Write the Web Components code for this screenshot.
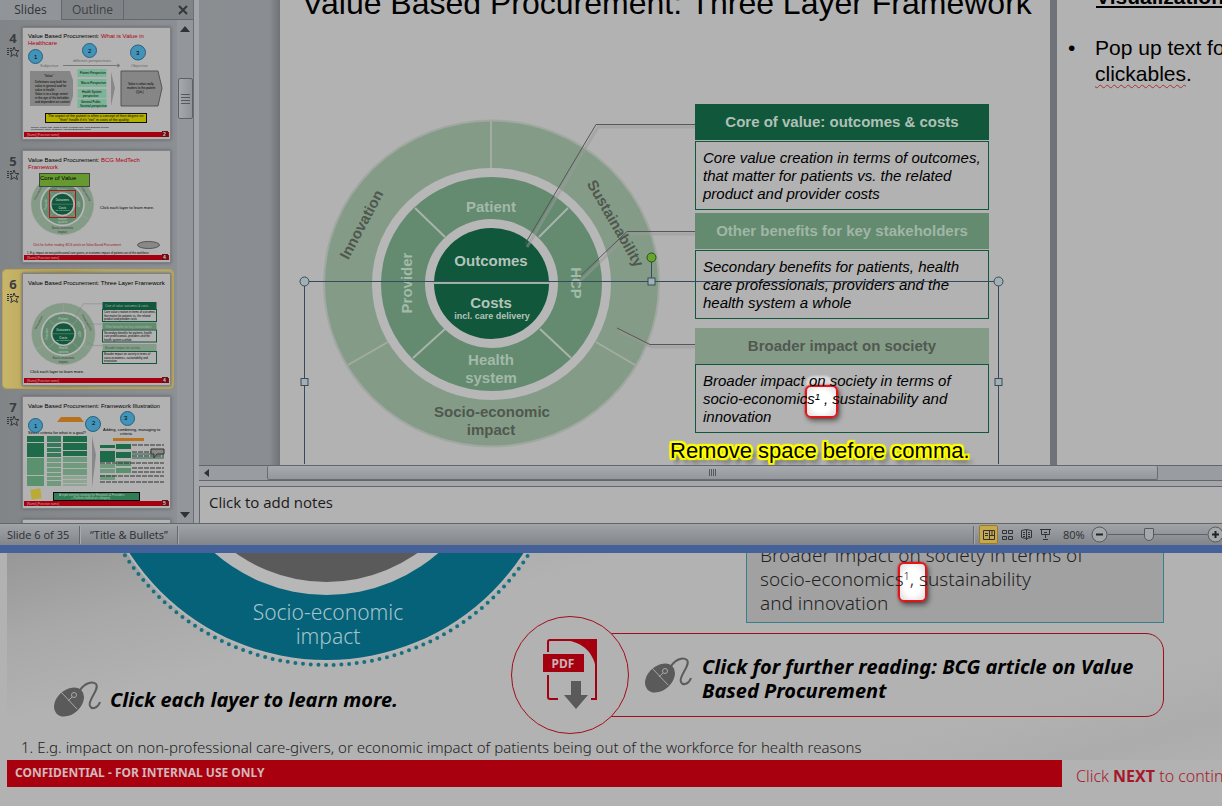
<!DOCTYPE html>
<html lang="en">
<head>
<meta charset="utf-8">
<title>Value Based Procurement review</title>
<style>
html,body{margin:0;height:100%}
body{background:#b2b2b2;color:#000;font-family:"Noto Sans","Open Sans",sans-serif;overflow:hidden}
</style>
</head>
<body>
<review-page></review-page>
<script>
const define = (name, html) => {
  const tpl = document.createElement('template');
  tpl.innerHTML = html;
  customElements.define(name, class extends HTMLElement {
    constructor() {
      super();
      this.attachShadow({ mode: 'open' }).append(tpl.content.cloneNode(true));
    }
  });
};

/* Three layer wheel, in slide coordinates */
const wheelArt = `
<g font-family="Liberation Sans, Arial, sans-serif" font-weight="700" font-size="15" text-anchor="middle">
<ellipse cx="491.500" cy="283.500" rx="167.500" ry="163" fill="#849c87" stroke="#a0a8a1" stroke-width="2"/>
<g stroke="#a3aba4" stroke-width="2"><path d="M491 121V168M348 365L388 342M635 365L596 342"/></g>
<ellipse cx="491.500" cy="284" rx="119.500" ry="116" fill="#b7b7b7"/>
<ellipse cx="491.500" cy="284" rx="110.500" ry="107" fill="#648b70"/>
<path d="M415 208L445 237M568 208L539 237M413 358L445 329M571 358L540 329" stroke="#a9b3ab" stroke-width="2"/>
<ellipse cx="491.500" cy="283.500" rx="66.500" ry="64.500" fill="#b7b7b7"/>
<ellipse cx="491.500" cy="283.500" rx="57.500" ry="55.500" fill="#10573b"/>
<path d="M433 283H550" stroke="#9fb0a6" stroke-width="2"/>
<g fill="none" stroke="#999" stroke-opacity=".5" stroke-width="3"><path d="M527 247L598 127H695M577 284L629 234H695M619 331L652 347H695"/></g>
<g fill="none" stroke="#565656" stroke-width="1"><path d="M525 244L596 124.500H695M575 281L627 231.500H695M617 328L650 344.500H695"/></g>
<g fill="#b4c4bb"><text x="491" y="266">Outcomes</text><text x="491" y="308">Costs</text>
<text x="492" y="319" font-size="9">incl. care delivery</text></g>
<g fill="#a3b9a9"><text x="491" y="212">Patient</text><text x="491" y="365">Health</text><text x="491" y="383">system</text>
<text transform="translate(412 283) rotate(-90)">Provider</text><text transform="translate(571 283) rotate(90)">HCP</text></g>
<g fill="#50574f"><text x="492" y="417">Socio-economic</text><text x="491" y="435">impact</text>
<text transform="translate(366 227) rotate(-62)">Innovation</text><text transform="translate(611 226) rotate(60)">Sustainability</text></g>
</g>`;

const mouseArt = `
<svg width="48" height="37" viewBox="0 0 48 37" aria-hidden="true">
<path d="M26 9C31 2 38 0 42 3C46 8 33 20 36 25C38 29 44 27 46 21" fill="none" stroke="#5c5c5c" stroke-width="2"/>
<ellipse cx="15" cy="21" rx="17" ry="12" transform="rotate(-42 15 21)" fill="#5a5a5a"/>
<path d="M7 11L23 28M14 20L18 16" stroke="#a8a8a8" stroke-width="1" fill="none"/>
<circle cx="20" cy="14" r="2.500" fill="none" stroke="#a8a8a8"/>
</svg>`;

define('slide-thumb', `
<style>
:host{display:grid;grid-template-columns:20px 147px;height:118px;box-sizing:border-box;padding:4px 0 0;margin:0 4px 5px 3px;border-radius:3px}
:host([selected]){background:linear-gradient(90deg,#c7b56b 0,#b39d4a 35%,#b5a970 60%,#b9ac70);outline:1px solid #b9a24c}
:host([empty]) .no{visibility:hidden}
.no{font:700 13px/20px "Noto Sans",sans-serif;color:#3a3d41;text-align:center}
.no svg{display:block;margin:-2px 0 0 3px}
.pic{display:block;width:147px;height:111px;background:#b2b2b2;box-shadow:0 0 0 1px #7f8184,0 0 3px 1px #5f6164}
</style>
<div class="no"><slot name="number"></slot>
<svg width="14" height="12" viewBox="0 0 14 12" fill="none" stroke="#33363a"><path d="M8 1L9.500 4.500L13 4.500L10.300 7L11.500 10.500L8 8.500L4.800 10.500L5.800 7L4 4.500H6.800Z"/><path d="M1 2.500H6M1 4.500H4M1 6.500H4M1 8.500H4" stroke-dasharray="2 1"/></svg>
</div>
<div class="pic"><slot></slot></div>`);

const thumbFoot = (n) => `
<rect x="1" y="104" width="145" height="5" fill="#a5000f"/><rect x="139" y="103" width="6" height="6" fill="#6d1016"/>
<text x="4" y="108" font-size="3" fill="#d9a0a5">[Name] [Function name]</text><text x="140" y="108" font-size="5" font-weight="700" fill="#d8c8c8">${n}</text>`;
const thumbOpen = '<svg width="147" height="111" viewBox="0 0 147 111" style="display:block" font-family="Liberation Sans, Arial, sans-serif" font-size="6">';
const bars = (x, w, fill, rows) => rows.map(([y, h]) => `<rect x="${x}" y="${y}" width="${w}" height="${h}" fill="${fill}"/>`).join('');

const thumb4 = thumbOpen + `
<text x="5" y="10">Value Based Procurement: <tspan fill="#b00010">What is Value in</tspan></text><text x="5" y="17" fill="#b00010">Healthcare</text>
<path d="M40 37.500H96M94 36L97 37.500L94 39" stroke="#777" fill="none"/>
<g fill="#666" font-size="4"><text x="17" y="39">Subjective</text><text x="50" y="34">different perspectives</text><text x="108" y="39">Objective</text></g>
<g fill="#4393b8" stroke="#23617f"><circle cx="12.500" cy="28.500" r="7"/><circle cx="66.500" cy="22.500" r="7"/><circle cx="115" cy="24.500" r="7.500"/></g>
<text x="11" y="31">1</text><text x="65" y="25">2</text><text x="113" y="27">3</text>
<path d="M7 43H47L50 52V68L47 78H7Z" fill="#868686"/><path d="M98 43H135L139 60L135 78H98Z" fill="#868686" stroke="#555"/>
<path d="M88 44L92 60L88 78Z" fill="#888"/>
${bars(54.5, 29, '#7ab597', [[41, 8], [51, 8], [61, 9], [71, 9]])}
<g font-size="3"><text x="21" y="49">"Value"</text><text x="12" y="55">Definitions vary both for</text><text x="12" y="59">value in general and for</text><text x="12" y="63">value in health</text><text x="12" y="67">Value is to a large extent</text><text x="12" y="71">in the eye of the beholder</text><text x="12" y="75">and dependent on context</text>
<text x="57" y="46">Patient Perspective</text><text x="58" y="56">Macro Perspective</text><text x="59" y="65">Health System</text><text x="60" y="69">perspective</text><text x="58" y="75">General Public</text><text x="57" y="79">Societal perspective</text>
<text x="105" y="57">Value is what really</text><text x="104" y="61">matters to the patient</text><text x="113" y="65">(QoL)</text></g>
<rect x="22.500" y="85.500" width="101" height="9" fill="#b5b000" stroke="#111"/>
<g font-size="3.500"><text x="25" y="89">The aspect of the patient is often a concept of their degree on</text><text x="36" y="93">"their" health if it's "not" in costs of the quality</text></g>
<g font-size="2.500"><text x="8" y="100">Source: Porter ME, What is value in health care, New England Journal</text><text x="8" y="102">of Medicine; 2010, Teisberg, Harvard Business School</text></g>
${thumbFoot(2)}</svg>`;

const thumb5 = thumbOpen + `
<text x="5" y="11">Value Based Procurement: <tspan fill="#b00010">BCG MedTech</tspan></text><text x="5" y="18" fill="#b00010">Framework</text>
<g transform="translate(-53 0) scale(.188)">${wheelArt.replace(/<g fill="none"[^]*?<\/g>/g, '')}</g>
<rect x="26.500" y="39.500" width="26" height="27" fill="none" stroke="#b01515"/>
<rect x="16.500" y="22.500" width="50" height="13" fill="#669a31" stroke="#444"/><text x="17" y="29">Core of Value</text>
<text x="77" y="58" font-size="4">Click each layer to learn more.</text>
<text x="10" y="95" font-size="3" fill="#a01520">Click for further reading: BCG article on Value Based Procurement</text>
<ellipse cx="125.500" cy="94" rx="11" ry="3.500" fill="#888" stroke="#555"/>
<text x="4" y="103" font-size="2.800">1. E.g. impact on non-professional care-givers, or economic impact of patients out of the workforce</text>
${thumbFoot(4)}</svg>`;

const miniCard = (y, fill, ink, head, lines) => `
<rect x="79.500" y="${y}" width="54" height="7" fill="${fill}"/><text x="82" y="${y + 5}" font-size="3" fill="${ink}">${head}</text>
<rect x="79.500" y="${y + 7.5}" width="54" height="12" fill="#b2b2b2" stroke="#10573b"/>
${lines.map((t, i) => `<text x="81" y="${y + 11 + i * 3.5}" font-size="2.800">${t}</text>`).join('')}`;
const thumb6 = thumbOpen + `
<text x="5" y="11">Value Based Procurement: Three Layer Framework</text>
<g transform="translate(-53 6) scale(.19)">${wheelArt}</g>
${miniCard(28, '#10573b', '#a4b8ab', 'Core of value: outcomes &amp; costs', ['Core value creation in terms of outcomes,', 'that matter for patients vs. the related', 'product and provider costs'])}
${miniCard(48.5, '#648b70', '#a4b8ab', 'Other benefits for key stakeholders', ['Secondary benefits for patients, health', 'care professionals, providers and the', 'health system a whole'])}
${miniCard(70, '#849c87', '#4c544c', 'Broader impact on society', ['Broader impact on society in terms of', 'socio-economics, sustainability and', 'innovation'])}
<text x="7" y="99" font-size="4">Click each layer to learn more.</text>
${thumbFoot(4)}</svg>`;

const thumb7 = thumbOpen + `
<text x="5" y="11">Value Based Procurement: Framework Illustration</text>
<path d="M34 25L38 20H57L61 25Z" fill="#b8711d"/><rect x="90" y="41" width="31" height="3" fill="#b8711d"/>
<text x="5" y="37" font-size="4">Select criteria for what is a goal?</text><text x="80" y="34" font-size="4">Adding, combining, managing to</text><text x="97" y="38" font-size="4">criteria</text>
<g fill="#4393b8" stroke="#23617f"><circle cx="12.500" cy="28.500" r="7"/><circle cx="70" cy="27" r="7.500"/><circle cx="104.500" cy="21.500" r="7"/></g>
<text x="11" y="31">1</text><text x="69" y="28">2</text><text x="101" y="23">3</text>
${bars(4, 17, '#1d6b49', [[39, 6], [46, 14]])}${bars(4, 17, '#5a916e', [[61, 17], [79, 10]])}
${bars(24, 14, '#35785a', [[39, 6], [46, 4], [51, 4], [56, 4]])}${bars(24, 14, '#6f9a7e', [[61, 4], [66, 4], [71, 4], [76, 3], [80, 3], [84, 5]])}
${bars(40, 24, '#1d6b49', [[39, 6], [46, 7], [54, 5]])}${bars(40, 24, '#6f9a7e', [[60, 5], [66, 5], [72, 6]])}${bars(40, 24, '#8fa594', [[79, 3], [83, 3], [87, 2]])}
<path d="M69 39L73 58L69 91Z" fill="#888"/>
${bars(77, 15, '#1d6b49', [[48, 3], [54, 11]])}${bars(93, 15, '#1d6b49', [[47, 5], [55, 6]])}${bars(77, 15, '#6f9a7e', [[67, 4], [72, 4], [78, 5]])}${bars(93, 15, '#5a916e', [[64, 5], [71, 5]])}
<path d="M109 48H141M109 55H141M109 59H141M77 66H141M109 71H141M109 75H141M77 79H141M77 85H141" stroke="#303030" stroke-width="1" stroke-dasharray="5 1"/>
<path d="M109 57H141M109 61H141" stroke="#1d6b49"/>
<path d="M128 52H141V57H134L131 61V57H128Z" fill="#888" stroke="#333"/>
<rect x="8" y="92" width="10" height="10" fill="#b9ab35" transform="rotate(-8 13 97)"/>
<rect x="30.500" y="95.500" width="86" height="8" fill="#2f7c55" stroke="#0b0b0b"/>
<g font-size="3" fill="#b8c9bf"><text x="36" y="99">A triple winning strategy for Hospitals &amp; Providers</text><text x="48" y="102">+ Patients based on category</text></g>
${thumbFoot(5)}</svg>`;

define('slides-pane', `
<style>
:host{display:grid;grid-template-rows:20px minmax(0,1fr);width:193px;background:#898c90;overflow:hidden;color:#3d4044;border-right:1px solid #6d6f73}
.tabs{display:flex;background:#818487;font:12px/18px "Open Sans","Noto Sans",sans-serif;border-bottom:1px solid #64676b}
button{font:inherit;color:inherit;border:0;background:none;padding:0}
.tabs button{width:62px;border-right:1px solid #64676b}
.tabs [aria-selected=true]{background:#919498;margin-bottom:-1px;color:#303337}
.tabs .shut{width:20px;margin-left:auto;border:0;display:grid;place-items:center}
.view{display:grid;grid-template-columns:1fr 16px;min-height:0}
.list{padding-top:4px;overflow:hidden;background:linear-gradient(90deg,#828588,#8c8f93)}
.bar{display:flex;flex-direction:column;align-items:center;background:#93969b}
.bar svg{display:block;margin:6px 0}
.thumb{width:13px;height:39px;margin-top:40px;border:1px solid #5e6165;border-radius:2px;background:linear-gradient(90deg,#a5a8ac,#909398);display:grid;place-content:center;gap:2px}
.thumb i{width:9px;height:1px;background:#55585c}
.grow{flex:1}
</style>
<div class="tabs" role="tablist"><button role="tab" aria-selected="true">Slides</button><button role="tab" aria-selected="false">Outline</button>
<button class="shut" aria-label="Close"><svg width="10" height="10" viewBox="0 0 10 10"><path d="M1 1L9 9M9 1L1 9" stroke="#33363a" stroke-width="2"/></svg></button></div>
<div class="view"><div class="list">
<slide-thumb><span slot="number">4</span>${thumb4}</slide-thumb>
<slide-thumb><span slot="number">5</span>${thumb5}</slide-thumb>
<slide-thumb selected><span slot="number">6</span>${thumb6}</slide-thumb>
<slide-thumb><span slot="number">7</span>${thumb7}</slide-thumb>
<slide-thumb empty></slide-thumb>
</div>
<div class="bar"><svg width="10" height="6"><path d="M0 6L5 0L10 6Z" fill="#2f3236"/></svg><div class="thumb"><i></i><i></i><i></i><i></i></div><div class="grow"></div><svg width="10" height="6"><path d="M0 0L5 6L10 0Z" fill="#2f3236"/></svg></div>
</div>`);

define('value-wheel', `
<style>:host{display:block}svg{display:block}</style>
<svg width="415" height="365" viewBox="280 100 415 365" role="img" aria-label="Three layer framework">${wheelArt}</svg>`);

define('info-card', `
<style>
:host{display:block;font:15px/18px "Liberation Sans",Arial,sans-serif}
h3{margin:0 0 var(--split,1px);font:inherit;font-weight:700;text-align:center;line-height:36px;background:var(--fill);color:var(--ink)}
p{margin:0;box-sizing:border-box;height:69px;padding:7px;border:1px solid #10573b;font-style:italic;white-space:nowrap;isolation:isolate}
</style>
<h3><slot name="heading"></slot></h3><p><slot></slot></p>`);

/* Bright window cut into the dimmed capture, behind the text it marks */
define('spot-light', `
<style>
:host{position:relative;display:inline-block}
:host::before{content:"";position:absolute;z-index:-1;left:var(--left,-2px);top:var(--top,-3px);width:var(--w,29px);height:var(--h,29px);background:radial-gradient(#fff 50%,#ddd);border:2px solid #e0161b;border-radius:6px;box-shadow:2px 3px 5px #0007,0 0 2px #e0161b}
:host([glow])::after{content:"";position:absolute;z-index:-2;left:-9px;top:-14px;width:27px;height:16px;border-radius:8px;background:#ddd;filter:blur(1px)}
</style><slot></slot>`);

define('slide-canvas', `
<style>
:host{display:flex;position:relative;overflow:hidden;background:linear-gradient(90deg,#8a8e91,#8a8e92 70px,#6f7276 81px,#6f7276);font-family:"Liberation Sans",Arial,sans-serif;border-bottom:1px solid #63676c}
.slide{width:770px;flex:none;margin-left:81px;background:#b2b2b2;position:relative}
h1{margin:-16px 0 0 22px;height:36px;font-size:32px;font-weight:400;line-height:38px;white-space:nowrap}
.body{display:flex;align-items:flex-start;margin-top:80px}
.cards{width:294px;margin-top:4px}
info-card+info-card{margin-top:3px}
info-card.last{margin-top:9px;--split:0}
.select{position:absolute;left:0;top:0;overflow:visible}
.tip{position:absolute;left:390px;top:438px;margin:0;font-size:22px;line-height:26px;white-space:nowrap;text-shadow:1px 0 1px #ff0,-1px 0 1px #ff0,0 1px 1px #ff0,0 -1px 1px #ff0,2px 0 1px #ff0,-2px 0 1px #ff0,0 2px 1px #ff0,0 -2px 1px #ff0,2px 2px 1px #ff0,-2px -2px 1px #ff0,2px -2px 1px #ff0,-2px 2px 1px #ff0,4px 5px 4px #0009}
aside{flex:1;min-width:0;margin-left:7px;background:#b2b2b2;padding-left:11px;font-size:21px;line-height:26px;white-space:nowrap;overflow:hidden}
aside h2{margin:-16px 0 0 28px;font-size:21px;line-height:26px;text-decoration:underline}
ul{margin:25px 0 0;padding:0;list-style:none}
li{display:grid;grid-template-columns:27px 1fr}
u{text-decoration:underline wavy #a33 1px;text-underline-offset:3px}
</style>
<section class="slide"><h1>Value Based Procurement: Three Layer Framework</h1>
<div class="body"><value-wheel></value-wheel>
<div class="cards">
<info-card style="--fill:#10573b;--ink:#b0c0b7"><span slot="heading">Core of value: outcomes &amp; costs</span>Core value creation in terms of outcomes,<br>that matter for patients vs. the related<br>product and provider costs</info-card>
<info-card style="--fill:#648b70;--ink:#a0b6a6"><span slot="heading">Other benefits for key stakeholders</span>Secondary benefits for patients, health<br>care professionals, providers and the<br>health system a whole</info-card>
<info-card class="last" style="--fill:#849c87;--ink:#515851"><span slot="heading">Broader impact on society</span>Broader impact on society in terms of<br>socio-economics<spot-light glow style="--left:-10px;--top:-5px">¹ ,</spot-light> sustainability and<br>innovation</info-card>
</div></div>
<svg class="select" width="770" height="464" viewBox="280 0 770 464" aria-hidden="true"><g fill="none" stroke="#35495f"><path d="M304.500 464V281.500H998.500V464M651.500 258V281"/></g>
<g fill="#9fb0b6" stroke="#3c4a56"><circle cx="304.500" cy="281.500" r="4.500"/><circle cx="998.500" cy="281.500" r="4.500"/><rect x="301" y="378.500" width="7" height="7"/><rect x="995" y="378.500" width="7" height="7"/><rect x="648" y="278" width="7" height="7"/></g>
<circle cx="651.500" cy="257.500" r="4.500" fill="#63a829" stroke="#2f4a20"/></svg>
<p class="tip">Remove space before comma.</p>
</section>
<aside><h2>Visualization</h2><ul><li><span>•</span><span>Pop up text for<br><u>clickables</u>.</span></li></ul></aside>`);

define('editor-pane', `
<style>
:host{display:grid;grid-template-rows:minmax(0,1fr) 15px 43px;min-width:0;background:#a4a6a9}
.scroll{display:grid;grid-template-columns:17px 51px minmax(0,891fr) minmax(0,64fr);background:#999ca1;border-bottom:1px solid #63676c;align-items:stretch}
.scroll svg{margin:3px 5px}
.scroll div{border:1px solid #696d72;border-top:0;border-radius:2px;background:linear-gradient(#a7aaae,#94979c);display:flex;gap:1px;align-items:center;justify-content:center}
.scroll i{width:1px;height:7px;background:#55585c}
.notes{margin:5px 0 0;border:1px solid #63676c;border-width:1px 0 0 1px;background:#b2b2b2;padding:3px 9px;font:15px/24px "Open Sans","Noto Sans",sans-serif;color:#1a1a1a}
</style>
<slide-canvas></slide-canvas>
<div class="scroll"><svg width="5" height="8"><path d="M5 0V8L0 4Z" fill="#2f3236"/></svg><span></span><div><i></i><i></i><i></i><i></i></div><span></span></div>
<div class="notes">Click to add notes</div>`);

define('status-bar', `
<style>
:host{display:flex;align-items:center;box-sizing:border-box;height:30px;border-top:1px solid #63676c;border-bottom:8px solid #456199;background:linear-gradient(#a1a4a7,#82858a);font:11px/20px "Open Sans","Noto Sans",sans-serif;color:#2c2f33;overflow:hidden}
span{padding-left:7px;box-sizing:border-box}
.sep{width:1px;height:18px;background:#65686c;border-right:1px solid #a7aaad;flex:none;padding:0}
.a{width:79px}.b{width:96px;padding-left:9px}
.push{flex:1}
button{border:0;background:none;padding:0;width:19px;height:19px;display:grid;place-items:center;flex:none}
button.on{background:#c7a84c;border:1px solid #9b7c26;border-radius:2px;margin-left:4px;box-sizing:border-box}
.pct{width:30px;padding-left:8px;margin-right:6px}
.round{width:17px;height:17px}
.round:last-child{margin-right:-2px}
input{appearance:none;width:99px;height:18px;margin:0;background:linear-gradient(#5d6064,#5d6064) center/100% 1px no-repeat}
input::-webkit-slider-thumb{appearance:none;width:10px;height:13px;background:#a5a8ab;border:1px solid #55585c;border-radius:1px 1px 5px 5px}
svg{display:block}
</style>
<span class="a">Slide 6 of 35</span><i class="sep"></i><span class="b">“Title &amp; Bullets”</span><i class="sep"></i><div class="push"></div><i class="sep"></i>
<button class="on" aria-label="Normal"><svg width="12" height="10" fill="none" stroke="#2f3236"><path d="M.5.5H11.500V9.500H.5ZM6.500 1V9M7 5.500H11M2 3.500H5M2 5.500H5M9 1V5"/></svg></button>
<button aria-label="Slide sorter"><svg width="11" height="10" fill="none" stroke="#2f3236"><path d="M.5.5H4.500V3.500H.5ZM6.500.5H10.500V3.500H6.500ZM.5 6.500H4.500V9.500H.5ZM6.500 6.500H10.500V9.500H6.500Z"/></svg></button>
<button aria-label="Reading view"><svg width="11" height="11" fill="none" stroke="#2f3236"><path d="M.5 1.500L5.500.5L10.500 1.500V8.500L5.500 9.500L.5 8.500ZM5.500 1V11M2 3.500H4M2 5.500H4M2 7.500H4M7 3.500H9M7 5.500H9M7 7.500H9"/></svg></button>
<button aria-label="Slide show"><svg width="11" height="11" fill="none" stroke="#2f3236"><path d="M0 .5H11M1.500 1V5.500H9.500V1M4 3.500H7M5.500 6V9M3 10.500H8"/></svg></button>
<span class="pct">80%</span>
<button class="round" aria-label="Zoom out"><svg width="17" height="17"><circle cx="8.500" cy="8.500" r="7.500" fill="#a5a8ab" stroke="#55585c"/><path d="M5 8.500H12" stroke="#222" stroke-width="2"/></svg></button>
<input type="range" aria-label="Zoom" min="0" max="100" value="41">
<button class="round" aria-label="Zoom in"><svg width="17" height="17"><circle cx="8.500" cy="8.500" r="7.500" fill="#a5a8ab" stroke="#55585c"/><path d="M5 8.500H12M8.500 5V12" stroke="#222" stroke-width="2"/></svg></button>`);

define('reading-link', `
<style>
:host{display:block}
a{display:flex;align-items:center;color:#000;text-decoration:none}
.disc{width:118px;height:118px;box-sizing:border-box;border:1px solid #a30c1c;border-radius:50%;display:grid;place-items:center;background:#b2b2b2;z-index:1;flex:none}
.pill{flex:1;display:flex;align-items:center;gap:9px;box-sizing:border-box;height:84px;margin-left:-18px;padding-left:33px;border:1px solid #a30c1c;border-radius:0 18px 18px 0;font:italic 700 20px/24px "Noto Sans","Open Sans",sans-serif;white-space:nowrap}
.label{padding-top:8px}
svg{flex:none}
</style>
<a href="#article"><span class="disc"><svg width="56" height="72" viewBox="0 0 56 72" aria-hidden="true">
<path d="M6 13V3Q6 1 8 1H54V60H49M6 36V58Q6 60 8 60H16" fill="none" stroke="#a50010" stroke-width="2"/>
<path d="M24 1H54V29C51 14 42 4 24 1Z" fill="#a50010"/><rect x="1" y="15" width="41" height="18" fill="#a50010"/>
<text x="21" y="29" text-anchor="middle" font-family="Noto Sans, sans-serif" font-weight="700" font-size="12" fill="#c9b3b4">PDF</text>
<path d="M29 42H39V56H46L34 70L22 56H29Z" fill="#5a5a5a"/></svg></span>
<span class="pill">${mouseArt}<span class="label"><slot></slot></span></span></a>`);

const dotRing = '<circle cx="319.500" cy="-128" r="240" fill="none" stroke="#17707f" stroke-width="4" stroke-linecap="round" stroke-dasharray="0 7.700"/>';
define('course-page', `
<style>
:host{display:block;overflow:hidden;background:#b2b2b2;padding-left:7px;color:#222}
.stage{background:linear-gradient(165deg,#979797 0,#a8a8a8 16%,#b2b2b2 32%,#b2b2b2 80%,#acacac 92%,#b0b0b0)}
.cols{display:grid;grid-template-columns:504px minmax(0,653px);height:180px}
.wheel{display:block}
.hint{display:flex;align-items:center;gap:8px;margin:14px 0 0 47px;font:italic 700 20px/24px "Noto Sans","Open Sans",sans-serif;color:#000}
.hint p{margin:0}
.box{margin-left:235px;height:70px;box-sizing:border-box;overflow:hidden;border:1px solid #37808a;border-top:0;background:#a1a1a1;padding-left:13px;font-size:19px;line-height:24px;display:flex;flex-direction:column;justify-content:flex-end;padding-bottom:7px;white-space:nowrap;isolation:isolate}
.box p{margin:0;font-weight:300}
sup{font-size:11px;line-height:0;vertical-align:6px}
reading-link{margin-top:-7px}
.note{margin:0;padding:3px 0 2px 14px;font-size:15px;font-weight:300;line-height:22px;white-space:nowrap}
footer{display:grid;grid-template-columns:1055px 1fr;align-items:center;gap:14px}
.bar{background:#a9000f;color:#d2b8ba;font-size:12px;font-weight:700;line-height:26px;padding-left:8px;height:27px}
footer a{color:#a5182a;font-size:16px;font-weight:300;line-height:20px;text-decoration:none;white-space:nowrap;padding-top:4px}
footer b{font-weight:700}
</style>
<div class="stage"><div class="cols">
<div><svg class="wheel" width="560" height="114" viewBox="0 0 560 114"><circle cx="319.500" cy="-128" r="237" fill="#b7b7b7"/>${dotRing}
<circle cx="319.500" cy="-128" r="235" fill="#066278"/><circle cx="319.500" cy="-128" r="170" fill="#b7b7b7"/><circle cx="319.500" cy="-128" r="157" fill="#5a5a5a"/>
<g fill="#a3c4cc" font-family="Noto Sans, sans-serif" font-size="21" font-weight="300" text-anchor="middle"><text x="321" y="67">Socio-economic</text><text x="321" y="91">impact</text></g></svg>
<div class="hint">${mouseArt}<p>Click each layer to learn more.</p></div></div>
<div><div class="box"><p>Broader impact on society in terms of<br>socio-economics<spot-light style="--left:-6px;--top:-5px;--w:25px;--h:36px"><sup>1</sup>,</spot-light> sustainability<br>and innovation</p></div>
<reading-link>Click for further reading: BCG article on Value<br>Based Procurement</reading-link></div></div>
<p class="note">1. E.g. impact on non-professional care-givers, or economic impact of patients being out of the workforce for health reasons</p></div>
<footer><div class="bar">CONFIDENTIAL - FOR INTERNAL USE ONLY</div><a href="#next">Click <b>NEXT</b> to continue</a></footer>`);

define('review-page', `
<style>
:host{display:grid;grid-template-rows:minmax(0,523fr) 30px minmax(0,253fr);height:100vh;overflow:hidden}
main{display:grid;grid-template-columns:199px minmax(0,1fr);min-height:0;background:#a2a5a9}
</style>
<main><slides-pane></slides-pane><editor-pane></editor-pane></main><status-bar></status-bar><course-page></course-page>`);
</script>
</body>
</html>
